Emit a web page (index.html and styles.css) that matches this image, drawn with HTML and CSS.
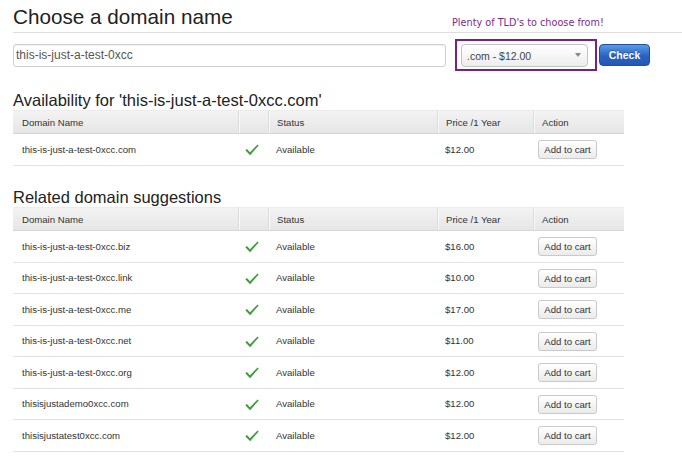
FILE: index.html
```html
<!DOCTYPE html>
<html>
<head>
<meta charset="utf-8">
<link rel="stylesheet" href="styles.css">
</head>
<body>
<div class="page">
  <header class="top">
    <h1 class="title">Choose a domain name</h1>
    <span class="note">Plenty of TLD's to choose from!</span>
  </header>
  <div class="searchbar">
    <div class="input">this-is-just-a-test-0xcc</div>
    <div class="highlight">
      <div class="select"><span>.com - $12.00</span><span class="caret"></span></div>
    </div>
    <button class="check">Check</button>
  </div>

  <h2 class="section">Availability for 'this-is-just-a-test-0xcc.com'</h2>
  <table class="domains">
    <colgroup><col class="c1"><col class="c2"><col class="c3"><col class="c4"><col class="c5"></colgroup>
    <thead><tr><th>Domain Name</th><th></th><th>Status</th><th>Price /1 Year</th><th>Action</th></tr></thead>
    <tbody>
      <tr><td>this-is-just-a-test-0xcc.com</td><td class="ok"><svg class="tick" width="14" height="12" viewBox="0 0 14 12"><path d="M0.3 6.3 L1.9 4.9 L5 8.2 L12.6 0.4 L13.7 1.4 L5.1 11.3 Z" fill="#3f9c37"/></svg></td><td>Available</td><td>$12.00</td><td class="act"><button class="cart">Add to cart</button></td></tr>
    </tbody>
  </table>

  <h2 class="section second">Related domain suggestions</h2>
  <table class="domains">
    <colgroup><col class="c1"><col class="c2"><col class="c3"><col class="c4"><col class="c5"></colgroup>
    <thead><tr><th>Domain Name</th><th></th><th>Status</th><th>Price /1 Year</th><th>Action</th></tr></thead>
    <tbody>
      <tr><td>this-is-just-a-test-0xcc.biz</td><td class="ok"><svg class="tick" width="14" height="12" viewBox="0 0 14 12"><path d="M0.3 6.3 L1.9 4.9 L5 8.2 L12.6 0.4 L13.7 1.4 L5.1 11.3 Z" fill="#3f9c37"/></svg></td><td>Available</td><td>$16.00</td><td class="act"><button class="cart">Add to cart</button></td></tr>
      <tr><td>this-is-just-a-test-0xcc.link</td><td class="ok"><svg class="tick" width="14" height="12" viewBox="0 0 14 12"><path d="M0.3 6.3 L1.9 4.9 L5 8.2 L12.6 0.4 L13.7 1.4 L5.1 11.3 Z" fill="#3f9c37"/></svg></td><td>Available</td><td>$10.00</td><td class="act"><button class="cart">Add to cart</button></td></tr>
      <tr><td>this-is-just-a-test-0xcc.me</td><td class="ok"><svg class="tick" width="14" height="12" viewBox="0 0 14 12"><path d="M0.3 6.3 L1.9 4.9 L5 8.2 L12.6 0.4 L13.7 1.4 L5.1 11.3 Z" fill="#3f9c37"/></svg></td><td>Available</td><td>$17.00</td><td class="act"><button class="cart">Add to cart</button></td></tr>
      <tr><td>this-is-just-a-test-0xcc.net</td><td class="ok"><svg class="tick" width="14" height="12" viewBox="0 0 14 12"><path d="M0.3 6.3 L1.9 4.9 L5 8.2 L12.6 0.4 L13.7 1.4 L5.1 11.3 Z" fill="#3f9c37"/></svg></td><td>Available</td><td>$11.00</td><td class="act"><button class="cart">Add to cart</button></td></tr>
      <tr><td>this-is-just-a-test-0xcc.org</td><td class="ok"><svg class="tick" width="14" height="12" viewBox="0 0 14 12"><path d="M0.3 6.3 L1.9 4.9 L5 8.2 L12.6 0.4 L13.7 1.4 L5.1 11.3 Z" fill="#3f9c37"/></svg></td><td>Available</td><td>$12.00</td><td class="act"><button class="cart">Add to cart</button></td></tr>
      <tr><td>thisisjustademo0xcc.com</td><td class="ok"><svg class="tick" width="14" height="12" viewBox="0 0 14 12"><path d="M0.3 6.3 L1.9 4.9 L5 8.2 L12.6 0.4 L13.7 1.4 L5.1 11.3 Z" fill="#3f9c37"/></svg></td><td>Available</td><td>$12.00</td><td class="act"><button class="cart">Add to cart</button></td></tr>
      <tr><td>thisisjustatest0xcc.com</td><td class="ok"><svg class="tick" width="14" height="12" viewBox="0 0 14 12"><path d="M0.3 6.3 L1.9 4.9 L5 8.2 L12.6 0.4 L13.7 1.4 L5.1 11.3 Z" fill="#3f9c37"/></svg></td><td>Available</td><td>$12.00</td><td class="act"><button class="cart">Add to cart</button></td></tr>
    </tbody>
  </table>
</div>
</body>
</html>
```

FILE: styles.css
```css
html, body {
  margin: 0;
  padding: 0;
  background: #fff;
  overflow: hidden;
}
body {
  font-family: "Liberation Sans", Arial, sans-serif;
  color: #333;
}
.page {
  padding-left: 13px;
}
.top {
  display: grid;
  grid-template-columns: 439px auto;
  align-items: end;
  padding-top: 5px;
  padding-bottom: 3px;
  border-bottom: 1px solid #dedede;
}
.title {
  margin: 0;
  font-size: 20.7px;
  line-height: 24px;
  font-weight: normal;
  color: #222;
}
.note {
  font-family: "Comic Sans MS", "DejaVu Sans", sans-serif;
  font-size: 9.7px;
  line-height: 12px;
  color: #7d2a8e;
}
.searchbar {
  display: flex;
  align-items: center;
  margin-top: 6px;
  height: 32px;
}
.input {
  box-sizing: border-box;
  width: 433px;
  height: 23px;
  border: 1px solid #cfcfcf;
  border-radius: 3px;
  box-shadow: inset 0 1px 1px rgba(0,0,0,0.06);
  font-size: 12px;
  line-height: 21px;
  padding-left: 2px;
  color: #555;
}
.highlight {
  box-sizing: border-box;
  width: 142px;
  height: 32px;
  margin-left: 9px;
  border: 2px solid #7a1f88;
  padding: 3px 7px 2px 4px;
}
.select {
  box-sizing: border-box;
  height: 23px;
  border: 1px solid #c4c4c4;
  border-radius: 4px;
  background: linear-gradient(#ffffff, #ededed);
  display: flex;
  align-items: center;
  justify-content: space-between;
  padding: 0 6px 0 5px;
  font-size: 10.5px;
  color: #444;
}
.caret {
  width: 0;
  height: 0;
  border-left: 3px solid transparent;
  border-right: 3px solid transparent;
  border-top: 4px solid #888;
  margin-top: -2px;
}
.check {
  box-sizing: border-box;
  width: 51px;
  height: 22px;
  margin-left: 2px;
  border: 1px solid #1d4f9e;
  border-radius: 4px;
  background: linear-gradient(#5a9ae6, #2a62c2 55%, #2457b4);
  color: #fff;
  font-family: "Liberation Sans", Arial, sans-serif;
  font-weight: bold;
  font-size: 10.5px;
  padding: 0;
  text-shadow: 0 -1px 0 rgba(0,0,0,0.25);
}
.section {
  margin: 20px 0 0;
  font-size: 16.5px;
  line-height: 19px;
  font-weight: normal;
  color: #222;
}
.section.second {
  margin-top: 22.5px;
}
.domains {
  width: 611px;
  table-layout: fixed;
  border-collapse: separate;
  border-spacing: 0;
  font-size: 9.6px;
}
.c1 { width: 225px; }
.c2 { width: 30px; }
.c3 { width: 169px; }
.c4 { width: 96px; }
.c5 { width: 91px; }
.domains th {
  height: 22px;
  padding: 0 0 0 8px;
  text-align: left;
  font-weight: normal;
  color: #333;
  background: linear-gradient(#f3f3f3, #e6e6e6);
  border-top: 1px solid #ececec;
  border-bottom: 1px solid #d6d6d6;
  box-shadow: inset 1px 0 0 #f9f9f9;
}
.domains th:first-child {
  padding-left: 9px;
  box-shadow: none;
}
.domains th + th {
  border-left: 1px solid #dcdcdc;
}
.domains td {
  height: 30.5px;
  padding: 0 0 0 8px;
  border-bottom: 1px solid #e2e2e2;
  color: #333;
  vertical-align: middle;
}
.domains td:first-child {
  padding-left: 9px;
}
.domains td.ok {
  padding: 0 0 0 7px;
}
.tick {
  display: block;
  margin-top: 2px;
}
.domains td.act {
  padding-left: 5px;
}
.cart {
  box-sizing: border-box;
  width: 59px;
  height: 19px;
  padding: 0;
  margin-top: 1px;
  border: 1px solid #c9c9c9;
  border-radius: 3px;
  background: linear-gradient(#ffffff, #ebebeb);
  font-family: "Liberation Sans", Arial, sans-serif;
  font-size: 9.6px;
  color: #333;
}
```
